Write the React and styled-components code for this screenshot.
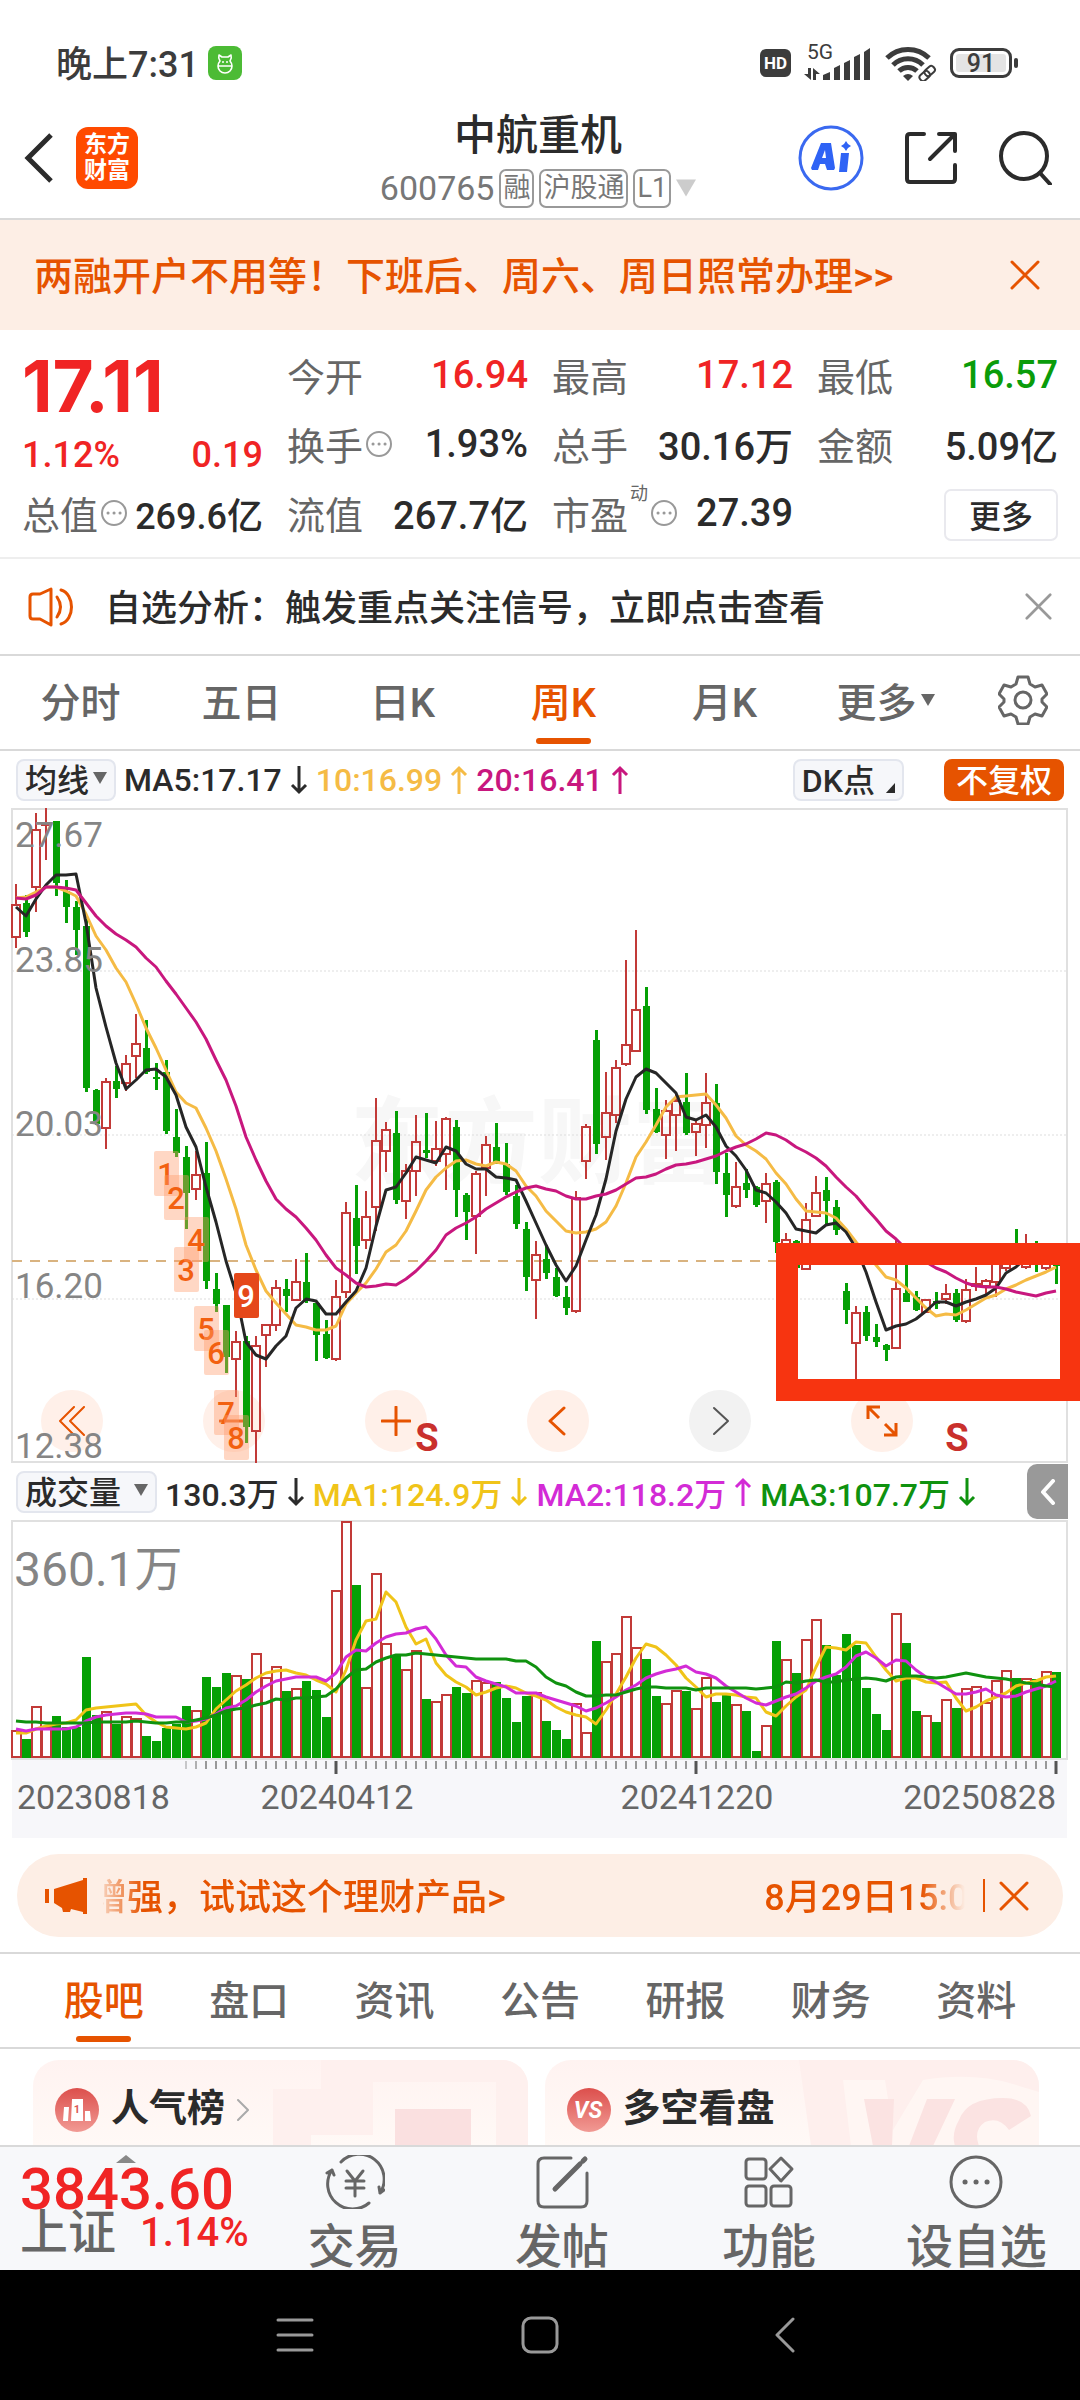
import React from "react";
import styled, { createGlobalStyle, css } from "styled-components";

const GlobalStyle = createGlobalStyle`
  * { box-sizing: border-box; }
  body {
    margin: 0;
    background: #fff;
    color: #2b2b2b;
    font-family: Roboto, "Noto Sans CJK SC", sans-serif;
    font-weight: 500;
  }
  button {
    margin: 0;
    padding: 0;
    border: 0;
    background: none;
    color: inherit;
    font: inherit;
    cursor: pointer;
  }
  a { color: inherit; text-decoration: none; }
  svg { display: block; flex: none; }
  h1, h2, p, dl, dt, dd { margin: 0; font-weight: 500; }
`;

const C = {
  ink: "#2b2b2b",
  grey: "#666",
  orange: "#e65300",
  red: "#f02424",
  green: "#0a9c0a",
  up: "#c23a38",
  down: "#05a005",
  ma5: "#262626",
  ma10: "#f5bb45",
  ma20: "#c8177e",
  vol1: "#f0c419",
  vol2: "#d32bd6",
  vol3: "#0f920f",
  line: "#d9d9d9",
  peach: "#fdeee5",
};

/* ---------- market data ---------- */

// direction, high, body top, body bottom, low (chart levels, 39 = top edge)
const CANDLES = `u 205 250 320 345|d 229 246 310 319|u 50 88 212 265|u 39 72 76 153|d 68 68 202 230|d 195 220 254 290|d 242 255 304 360|d 280 297 648 658|d 652 654 727 730|u 626 636 736 781|d 600 633 650 671|u 576 597 638 655|u 487 553 579 628|d 500 562 614 618|d 595 624 629 653|d 588 615 743 748|d 695 755 790 800|d 775 800 878 957|u 785 838 868 892|d 767 833 1070 1086|d 1051 1087 1119 1136|d 1122 1122 1234 1270|u 1178 1203 1238 1322|d 1190 1199 1388 1421|u 1190 1210 1396 1466|u 1163 1166 1186 1256|u 1068 1084 1165 1178|d 1065 1087 1101 1137|u 1021 1072 1110 1113|d 1008 1072 1112 1117|d 1117 1118 1186 1243|d 1155 1184 1237 1239|u 1067 1105 1238 1243|u 897 922 1093 1107|d 861 933 993 1055|u 873 930 979 1000|u 671 765 907 960|u 722 741 786 832|d 698 746 892 902|u 815 829 895 934|u 708 766 830 884|d 703 784 791 802|u 720 782 808 818|u 711 717 793 872|d 719 733 872 929|d 877 881 919 980|u 830 837 928 1010|u 754 774 822 883|d 726 778 810 815|d 769 815 875 881|d 860 885 946 955|d 940 957 1060 1092|u 982 1012 1067 1151|d 990 1022 1052 1064|d 1040 1061 1101 1104|d 1081 1103 1128 1144|u 874 889 1134 1139|u 727 733 808 847|d 523 545 770 793|u 614 703 755 805|u 587 605 708 725|u 371 555 597 602|u 304 479 568 571|d 429 470 697 706|d 648 695 745 747|u 674 699 751 804|u 657 677 708 785|d 616 680 747 751|u 720 728 744 797|u 616 681 730 779|d 640 681 831 858|d 790 834 881 929|u 809 865 905 911|d 825 855 871 888|d 862 865 903 907|u 833 858 896 942|d 849 853 985 1008|u 964 980 1010 1012|d 980 982 1040 1045|u 900 936 1042 1045|u 841 877 927 930|d 843 871 896 945|d 892 908 958 969|d 1074 1091 1132 1162|u 1123 1139 1204 1300|d 1124 1136 1190 1199|d 1163 1192 1202 1212|d 1206 1208 1219 1243|u 980 1087 1215 1218|d 1020 1095 1114 1116|d 1090 1105 1133 1135|u 1108 1110 1137 1139|d 1093 1112 1120 1130|u 1075 1098 1108 1120|d 1086 1095 1155 1158|u 1065 1089 1157 1160|u 1038 1075 1079 1090|u 1065 1069 1081 1100|u 1000 1030 1071 1105|u 1000 1005 1040 1048|d 957 1000 1020 1030|u 967 1010 1038 1043|d 983 1000 1030 1050|u 1010 1015 1040 1046|d 1005 1010 1036 1075`
  .split("|")
  .map((row) => {
    const [dir, ...rest] = row.split(" ");
    const [high, top, bottom, low] = rest.map(Number);
    return { dir, high, top, bottom, low };
  });

const MA5 = [255,275,238,207,184,184,183,290,430,515,595,652,631,610,608,625,665,733,777,865,940,1025,1095,1202,1230,1240,1210,1190,1127,1108,1112,1142,1142,1115,1090,1040,950,872,865,833,800,805,812,778,787,815,826,825,843,844,850,896,942,990,1035,1070,1037,980,925,848,742,673,624,608,617,637,660,713,719,708,733,776,798,828,870,878,898,921,955,961,965,948,943,962,998,1050,1115,1176,1168,1163,1151,1134,1114,1116,1124,1115,1109,1099,1085,1052,1038,1020,1015,1018,1022];
const MA10 = [236,232,222,212,212,220,230,270,318,348,388,418,466,518,562,610,658,682,693,737,785,848,912,990,1045,1090,1118,1142,1164,1170,1176,1177,1167,1120,1095,1073,1042,1007,990,960,916,872,842,822,808,806,815,818,811,815,830,862,885,917,938,960,965,963,957,940,906,855,800,766,730,690,668,667,663,661,685,715,753,772,787,804,834,858,890,916,920,922,932,955,985,1010,1035,1060,1066,1085,1106,1128,1145,1142,1144,1133,1120,1106,1099,1087,1077,1067,1058,1050,1038];
const MA20 = [236,238,228,212,211,214,217,245,275,297,313,327,342,365,386,415,445,475,506,543,587,632,687,755,805,852,890,913,930,953,980,1012,1040,1056,1073,1083,1081,1075,1077,1065,1047,1025,1002,970,954,942,930,913,899,887,876,866,862,868,874,883,890,890,885,879,870,858,844,842,836,826,817,815,811,803,796,786,778,770,759,747,751,763,777,789,802,819,843,864,884,910,935,960,978,1000,1018,1028,1040,1050,1062,1074,1080,1082,1082,1086,1093,1098,1102,1096,1090];

// volume bar levels, 240 = top edge, 955 = zero line
const VOLUMES = "u870 d897 u797 u858 d828 d862 d860 d650 d825 u814 d852 u827 u834 d888 d903 d865 d852 d798 u810 d712 d741 d699 u705 d716 u640 u710 u679 d753 u745 d724 d750 d831 u450 u243 d434 u742 u398 u608 d645 u687 u630 d778 u783 u762 d741 d760 u720 u725 d727 d773 d846 d768 u755 d843 d871 d896 u789 u877 d603 u663 u639 u527 u620 d656 d767 u789 u750 d753 u804 u711 d787 d760 u792 d814 d932 u855 d602 u658 d699 u597 u537 d614 d705 d581 d614 d744 d821 d871 u518 d608 d814 u825 d846 u777 d803 u744 u737 u786 u719 u690 d715 u713 d718 u694 d697"
  .split(" ")
  .map((v) => ({ dir: v[0], top: Number(v.slice(1)) }));

const VMA1 = [880,880,868,858,852,850,840,810,803,801,798,795,793,825,845,860,864,867,862,850,806,780,752,735,715,700,693,690,698,705,720,732,757,690,600,542,538,455,487,560,613,597,670,705,727,740,765,755,745,738,745,760,768,780,800,815,825,831,852,810,762,710,655,612,622,645,675,715,742,770,763,761,765,772,775,815,828,797,770,750,680,620,624,630,607,610,650,690,723,715,714,725,728,726,775,812,800,783,770,758,738,730,722,712,708];
const VMA2 = [868,872,867,868,867,866,860,842,832,826,822,818,820,823,830,830,831,845,842,838,822,805,797,780,755,738,722,716,710,710,712,724,700,650,630,634,608,592,582,578,566,562,597,645,677,680,710,723,732,741,760,760,758,770,781,790,797,812,803,790,770,750,735,715,703,693,688,678,695,702,715,738,757,775,790,795,782,770,762,745,722,710,702,680,648,637,655,677,660,662,690,712,727,745,762,762,757,747,765,772,767,757,746,737,722];
const VMA3 = [843,847,847,848,850,850,848,850,847,846,846,846,844,846,850,848,847,845,840,835,825,812,808,803,794,788,776,779,775,773,770,768,748,715,690,687,665,653,646,644,638,641,645,648,652,655,658,657,656,658,663,662,680,710,730,738,755,768,767,766,766,755,747,740,741,743,743,745,749,745,743,743,743,744,747,744,740,725,728,723,720,725,727,720,717,715,718,723,710,707,708,710,713,711,705,698,705,712,714,718,724,730,733,737,740];

const SIGNALS = [
  ["1", 15, 786], ["2", 16, 838], ["3", 17, 996], ["4", 18, 930], ["5", 19, 1124],
  ["6", 20, 1175], ["7", 21, 1307], ["8", 22, 1360], ["9", 23, 1052],
];

const xOf = (i) => 4 + i * 10;
const priceY = (v) => Math.round((v - 39) / 2.178);
const volumeY = (v) => Math.round((v - 240) / 3);
const points = (list, scale) => list.map((v, i) => `${xOf(i)},${scale(v)}`).join(" ");

/* ---------- shared parts ---------- */

const Page = styled.div`
  display: flex;
  flex-direction: column;
  overflow: hidden;
`;

const Row = styled.div`
  display: flex;
  align-items: center;
  gap: ${(p) => p.$gap || 0}px;
`;

const IconButton = styled.button`
  display: flex;
  align-items: center;
  justify-content: center;
`;

const Stroke = ({ w, h, box, color = C.ink, width = 3, children, ...rest }) => (
  <svg width={w} height={h} viewBox={box || `0 0 ${w} ${h}`} fill="none" stroke={color}
    strokeWidth={width} strokeLinecap="round" strokeLinejoin="round" aria-hidden="true" {...rest}>
    {children}
  </svg>
);

const Cross = ({ size, color }) => (
  <Stroke w={size} h={size} box="0 0 30 30" color={color} width={3}>
    <path d="M2 2 28 28M28 2 2 28" />
  </Stroke>
);

const Arrow = ({ up }) => (
  <Stroke w={18} h={30} color="currentColor" width={3} strokeLinecap="butt" strokeLinejoin="miter">
    {up ? <path d="M9 29V3M2 10 9 3l7 7" /> : <path d="M9 1v26M2 20l7 7 7-7" />}
  </Stroke>
);

const Caret = ({ size = 14, color = C.grey }) => (
  <svg width={size} height={size} viewBox="0 0 14 14" fill={color} aria-hidden="true">
    <path d="M0 1h14L7 13z" />
  </svg>
);

/* ---------- status bar ---------- */

const StatusBar = styled.div`
  display: flex;
  justify-content: space-between;
  align-items: center;
  height: 102px;
  padding: 24px 62px 0 56px;
  color: #3c3c3c;
  font-size: 36px;
`;

const Clock = styled.span`
  padding-bottom: 4px;
`;

const Battery = styled.div`
  display: flex;
  align-items: center;
  gap: 2px;
  &::after {
    content: "";
    width: 4px;
    height: 10px;
    border-radius: 2px;
    background: #3c3c3c;
  }
`;

const BatteryCell = styled.span`
  width: 62px;
  height: 30px;
  border: 3px solid #3c3c3c;
  border-radius: 9px;
  background: #e4e4e4;
  box-shadow: inset 0 0 0 3px #fff;
  font-size: 25px;
  line-height: 25px;
  text-align: center;
`;

const HdBadge = styled.span`
  width: 31px;
  height: 28px;
  border-radius: 6px;
  background: #3c3c3c;
  color: #fff;
  font-size: 17px;
  font-weight: 700;
  line-height: 28px;
  text-align: center;
`;

/* ---------- header ---------- */

const Header = styled.header`
  display: grid;
  grid-template-columns: 1fr auto 1fr;
  align-items: center;
  height: 118px;
  padding: 0 28px 4px 24px;
  border-bottom: 2px solid ${C.line};
`;

const Logo = styled.a`
  display: grid;
  place-content: center;
  width: 62px;
  height: 62px;
  border-radius: 12px;
  background: #ff4a00;
  color: #fff;
  font-size: 23px;
  font-weight: 700;
  line-height: 26px;
`;

const TitleBlock = styled.div`
  display: flex;
  flex-direction: column;
  align-items: center;
  gap: 6px;
`;

const Title = styled.h1`
  font-size: 42px;
  line-height: 54px;
`;

const Code = styled.span`
  color: #777;
  font-size: 34px;
  font-weight: 400;
  line-height: 38px;
`;

const Tag = styled.span`
  height: 39px;
  padding: 0 2px;
  border: 2px solid #999;
  border-radius: 7px;
  color: #777;
  font-size: 27px;
  font-weight: 400;
  line-height: 34px;
`;

const HeaderActions = styled(Row)`
  justify-content: flex-end;
`;

/* ---------- banner and notice ---------- */

const Banner = styled.section`
  display: flex;
  align-items: center;
  justify-content: space-between;
  height: 110px;
  padding: 0 40px 0 34px;
  background: ${C.peach};
  color: ${C.orange};
  font-size: 39px;
  a { padding-bottom: 4px; }
`;

const Notice = styled.section`
  display: flex;
  align-items: center;
  gap: 30px;
  height: 97px;
  padding: 0 28px;
  border-bottom: 2px solid ${C.line};
  font-size: 36px;
  p { flex: 1; padding-bottom: 4px; }
`;

/* ---------- quote ---------- */

const Quote = styled.section`
  display: grid;
  grid-template-columns: repeat(4, 1fr);
  column-gap: 24px;
  padding: 12px 22px 8px;
  border-bottom: 2px solid #eee;
`;

const Cell = styled.dl`
  display: flex;
  align-items: center;
  justify-content: space-between;
  height: 69px;
  padding-bottom: 4px;
  white-space: nowrap;
  dt {
    display: flex;
    align-items: center;
    gap: 2px;
    color: ${C.grey};
    font-size: 38px;
    font-weight: 400;
  }
  dd {
    color: ${(p) => p.$color || C.ink};
    font-size: ${(p) => (p.$compact ? 36 : 38)}px;
  }
`;

const LastPrice = styled.p`
  height: 88px;
  color: ${C.red};
  font-family: Inter, sans-serif;
  font-size: 71px;
  font-weight: 700;
  line-height: 88px;
`;

const ChangeRow = styled.p`
  display: flex;
  align-items: center;
  justify-content: space-between;
  height: 50px;
  color: ${C.red};
  font-size: 36px;
`;

const Sup = styled.sup`
  align-self: flex-start;
  font-size: 18px;
  line-height: 18px;
`;

const MoreCell = styled.div`
  display: flex;
  align-items: center;
  justify-content: flex-end;
  height: 69px;
`;

const MoreButton = styled.button`
  width: 114px;
  height: 52px;
  padding-bottom: 2px;
  border: 2px solid #e9e9ee;
  border-radius: 7px;
  font-size: 32px;
`;

const Info = () => (
  <Stroke w={28} h={28} color="#999" width={2}>
    <circle cx="14" cy="14" r="12" />
    <path d="M8 14h.1M14 14h.1M20 14h.1" strokeWidth="3" />
  </Stroke>
);

const Item = ({ label, value, color, info, sup, compact }) => (
  <Cell $color={color} $compact={compact}>
    <dt>{label}{sup && <Sup>{sup}</Sup>}{info && <Info />}</dt>
    <dd>{value}</dd>
  </Cell>
);

/* ---------- tabs ---------- */

const Tabs = styled.nav`
  display: grid;
  grid-template-columns: ${(p) => p.$columns};
  height: 95px;
  padding: 0 ${(p) => p.$pad || 0}px;
  border-bottom: 2px solid ${C.line};
`;

const Tab = styled.button`
  position: relative;
  display: flex;
  align-items: center;
  justify-content: center;
  gap: 4px;
  padding-bottom: 5px;
  color: ${C.grey};
  font-size: 40px;
  ${(p) => p.$active && css`
    color: ${C.orange};
    &::after {
      content: "";
      position: absolute;
      bottom: 5px;
      width: 55px;
      height: 6px;
      border-radius: 3px;
      background: ${C.orange};
    }
  `}
`;

/* ---------- chart ---------- */

const ChartSection = styled.section`
  padding: 0 12px;
`;

const Legend = styled.div`
  display: flex;
  align-items: center;
  gap: 8px;
  height: 57px;
  padding: 0 4px;
  font-size: 32px;
  white-space: nowrap;
`;

const LegendItem = styled.span`
  display: flex;
  align-items: center;
  gap: 8px;
  color: ${(p) => p.$color};
`;

const Chip = styled.button`
  display: flex;
  align-items: center;
  gap: ${(p) => p.$gap || 4}px;
  height: 42px;
  padding: 0 7px 3px;
  border: 2px solid #e3e6ee;
  border-radius: 8px;
  background: #f6f7fa;
  font-size: 32px;
`;

const SolidChip = styled(Chip)`
  margin-left: 32px;
  padding: 0 10px 3px;
  border-color: ${C.orange};
  background: ${C.orange};
  color: #fff;
`;

const Spacer = styled.span`
  flex: 1;
`;

const Plot = styled.div`
  position: relative;
  svg.plot {
    position: relative;
    width: 100%;
    height: auto;
    overflow: visible;
    pointer-events: none;
  }
  text { font-family: Roboto, "Noto Sans CJK SC", sans-serif; }
`;

const Controls = styled.div`
  position: absolute;
  left: 29px;
  bottom: 11px;
  display: flex;
  gap: 100px;
`;

const RoundButton = styled.button`
  display: grid;
  place-items: center;
  width: 62px;
  height: 62px;
  border-radius: 50%;
  background: ${(p) => (p.$muted ? "#f2f2f2" : "#fff0e9")};
`;

const Highlight = styled.div`
  position: absolute;
  top: 435px;
  left: 764px;
  right: -12px;
  height: 158px;
  border: 22px solid #f73410;
  border-right-width: 20px;
`;

const Drawer = styled.button`
  display: grid;
  place-items: center;
  align-self: stretch;
  width: 41px;
  margin: 1px -4px 1px 0;
  border-radius: 10px 0 0 10px;
  background: #999;
`;

const Average = ({ list, scale, color }) => (
  <polyline points={points(list, scale)} fill="none" stroke={color} strokeWidth="3" strokeLinejoin="round" />
);

const Candle = ({ data, x }) => {
  const [h, t, b, l] = [data.high, data.top, data.bottom, data.low].map(priceY);
  const size = Math.max(b - t, 2);
  if (data.dir === "d") {
    return (
      <g fill={C.down}>
        <rect x={x - 1} y={h} width="3" height={Math.max(l - h, 1)} />
        <rect x={x - 3} y={t} width="7" height={size} />
      </g>
    );
  }
  return (
    <g stroke={C.up} strokeWidth="2" fill="none">
      <path d={`M${x} ${h}V${t}M${x} ${b}V${l}`} />
      <rect x={x - 4} y={t} width="8" height={size} />
    </g>
  );
};

const PriceChart = () => (
  <svg className="plot" viewBox="0 0 1056 655" role="img" aria-label="周K线图">
    <text x="338" y="368" fontSize="94" fontWeight="700" fill="#f7f7f7">东方财富</text>
    <rect x="0" y="1" width="1055" height="653" fill="none" stroke="#e0e0e0" strokeWidth="2" />
    {[395, 752, 1109].map((v) => (
      <path key={v} d={`M0 ${priceY(v)}H1055`} stroke="#ddd" strokeWidth="1" strokeDasharray="2 2" />
    ))}
    <path d={`M0 ${priceY(1025)}H1055`} stroke="#d9b380" strokeWidth="2" strokeDasharray="10 8" />
    {CANDLES.map((c, i) => <Candle key={i} data={c} x={xOf(i)} />)}
    <Average list={MA10} scale={priceY} color={C.ma10} />
    <Average list={MA5} scale={priceY} color={C.ma5} />
    <Average list={MA20} scale={priceY} color={C.ma20} />
    <g fontSize="35" fill="#858585" fontWeight="400">
      <text x="3" y="39">27.67</text>
      <text x="3" y="164">23.85</text>
      <text x="3" y="328">20.03</text>
      <text x="3" y="490">16.20</text>
      <text x="3" y="650">12.38</text>
    </g>
    {SIGNALS.map(([n, i, v]) => (
      <g key={n} textAnchor="middle" fontSize="31" fontWeight="500">
        <rect x={xOf(i) - 12} y={priceY(v)} width="25" height="45" rx="2"
          fill={n === "9" ? "#e5481a" : "#ff9b6c"} fillOpacity={n === "9" ? 1 : 0.4} />
        <text x={xOf(i)} y={priceY(v) + 34} fill={n === "9" ? "#fff" : "#f26010"}>{n}</text>
      </g>
    ))}
    <g fontSize="38" fontWeight="700" fill="#c9302c" textAnchor="middle">
      <text x="415" y="643">S</text>
      <text x="945" y="643">S</text>
    </g>
  </svg>
);

const VolumeChart = () => {
  const base = volumeY(955);
  return (
    <svg className="plot" viewBox="0 0 1056 240" role="img" aria-label="成交量图">
      <rect x="0" y="1" width="1055" height="238" fill="none" stroke="#e0e0e0" strokeWidth="2" />
      {VOLUMES.map((b, i) => {
        const y = volumeY(b.top);
        return b.dir === "d"
          ? <rect key={i} x={xOf(i) - 4} y={y} width="9" height={base - y} fill={C.down} />
          : <rect key={i} x={xOf(i) - 4} y={y + 1} width="9" height={base - y - 2} fill="#fff" stroke={C.up} strokeWidth="2" />;
      })}
      <Average list={VMA1} scale={volumeY} color={C.vol1} />
      <Average list={VMA2} scale={volumeY} color={C.vol2} />
      <Average list={VMA3} scale={volumeY} color={C.vol3} />
      <text x="2" y="66" fontSize="48" fill="#858585" fontWeight="400">360.1万</text>
    </svg>
  );
};

const Axis = () => (
  <svg className="plot" viewBox="0 0 1056 78" aria-hidden="true">
    <rect width="1055" height="78" fill="#f7f7fa" />
    {Array.from({ length: 88 }, (_, k) => k + 17).map((i) => {
      const major = i === 32 || i === 68 || i === 104;
      return <path key={i} d={`M${xOf(i)} 1v${major ? 13 : 8}`} stroke={major ? "#555" : "#999"}
        strokeWidth={major ? 3 : 2} opacity={Math.min(1, (i - 15) / 4)} />;
    })}
    <g fontSize="34" fill={C.grey} fontWeight="400">
      <text x="5" y="49">20230818</text>
      <text x="325" y="49" textAnchor="middle">20240412</text>
      <text x="685" y="49" textAnchor="middle">20241220</text>
      <text x="1044" y="49" textAnchor="end">20250828</text>
    </g>
  </svg>
);

/* ---------- promo ---------- */

const PromoWrap = styled.section`
  padding: 16px 17px 15px;
  border-bottom: 2px solid ${C.line};
`;

const Promo = styled.div`
  display: flex;
  align-items: center;
  height: 83px;
  padding: 0 34px 0 28px;
  border-radius: 42px;
  background: ${C.peach};
  color: ${C.orange};
`;

const Marquee = styled.a`
  flex: 1;
  display: flex;
  justify-content: space-between;
  min-width: 0;
  margin: 0 18px 0 16px;
  padding-bottom: 4px;
  overflow: hidden;
  font-size: 36px;
  white-space: nowrap;
  mask-image: linear-gradient(90deg, rgba(0,0,0,.2), #000 40px, #000 calc(100% - 44px), transparent);
  span:first-child { margin-left: -12px; }
  span:last-child { margin-right: -24px; }
`;

const Divider = styled.i`
  width: 2px;
  height: 33px;
  margin-right: 14px;
  background: ${C.orange};
`;

/* ---------- cards ---------- */

const Cards = styled.section`
  display: grid;
  grid-template-columns: 1fr 1fr;
  gap: 17px;
  height: 96px;
  padding: 11px 41px 0 33px;
`;

const Card = styled.a`
  position: relative;
  display: flex;
  align-items: center;
  gap: 12px;
  padding: 14px 22px 0;
  overflow: hidden;
  border-radius: 26px 26px 0 0;
  background: linear-gradient(#fff3f1, #fff9f6);
  h2 { padding-bottom: 4px; font-size: 38px; font-weight: 700; line-height: 48px; z-index: 1; }
  svg { z-index: 1; }
`;

const CardArt = styled.svg`
  position: absolute;
  right: 0;
  top: 0;
  && { z-index: 0; }
`;

/* ---------- bottom bar ---------- */

const BottomBar = styled.nav`
  display: grid;
  grid-template-columns: 251px repeat(4, 1fr);
  height: 125px;
  overflow: hidden;
  border-top: 2px solid ${C.line};
  background: #f7f8fa;
`;

const IndexLink = styled.a`
  display: flex;
  flex-direction: column;
  padding: 8px 0 0 20px;
  color: ${C.red};
  white-space: nowrap;
  svg { margin-left: 96px; }
`;

const IndexValue = styled.span`
  font-size: 58px;
  line-height: 48px;
`;

const IndexRow = styled.span`
  display: flex;
  align-items: center;
  gap: 24px;
  font-size: 40px;
  line-height: 40px;
  b { color: ${C.grey}; font-size: 48px; font-weight: 500; }
`;

const BarButton = styled.button`
  display: flex;
  flex-direction: column;
  align-items: center;
  justify-content: flex-start;
  gap: 4px;
  padding-top: 8px;
  color: ${C.grey};
  font-size: 47px;
  line-height: 68px;
`;

const SystemNav = styled.nav`
  display: flex;
  align-items: center;
  justify-content: center;
  gap: 207px;
  height: 130px;
  background: #000;
`;

const SystemButton = styled(IconButton)`
  width: 38px;
  height: 40px;
`;

/* ---------- page ---------- */

export default function App() {
  return (
    <Page>
      <GlobalStyle />

      <StatusBar>
        <Row $gap={9}>
          <Clock>晚上7:31</Clock>
          <svg width="34" height="34" viewBox="0 0 34 34" aria-hidden="true">
            <rect width="34" height="34" rx="8" fill="#4cbb35" />
            <g fill="none" stroke="#fff" strokeWidth="1.6" strokeLinejoin="round">
              <path d="M12 15q-2-3-1-6l3 2h6l3-2q1 3-1 6a8 8 0 0 1 2 5c0 4-3 7-7 7s-7-3-7-7a8 8 0 0 1 2-5zM10 20h14" />
            </g>
            <circle cx="15" cy="16" r="1" fill="#fff" /><circle cx="19" cy="16" r="1" fill="#fff" />
          </svg>
        </Row>
        <Row $gap={13}>
          <HdBadge>HD</HdBadge>
          <svg width="68" height="36" viewBox="0 0 68 36" fill="#3c3c3c" overflow="visible" aria-hidden="true">
            <text x="3" y="14" fontSize="21" fontFamily="Roboto" fontWeight="400">5G</text>
            <path d="M0 29h4v-6h3v12zM9 23l7 6h-4v6H9z" />
            <path d="M19 30l7-3v8h-7zM30 23l6-3v15h-6zM40 18l6-3v20h-6zM50 12l6-3v26h-6zM60 7l6-4v32h-6z" />
          </svg>
          <svg width="52" height="36" viewBox="0 0 52 36" fill="none" stroke="#3c3c3c" strokeWidth="5" aria-hidden="true">
            <path d="M2 13a30 30 0 0 1 42 0M8 20a21 21 0 0 1 30 0M14 26a13 13 0 0 1 18 0" />
            <path d="M18 31q5-4 10 0l-5 5z" fill="#3c3c3c" stroke="none" />
            <g strokeWidth="2"><rect x="-5" y="-3" width="11" height="7" rx="3" transform="translate(39 31) rotate(-42)" />
              <rect x="-5" y="-3" width="11" height="7" rx="3" transform="translate(44 26) rotate(-42)" /></g>
          </svg>
          <Battery><BatteryCell>91</BatteryCell></Battery>
        </Row>
      </StatusBar>

      <Header>
        <Row $gap={22}>
          <IconButton aria-label="返回">
            <Stroke w={30} h={50} width={5} strokeLinecap="butt" strokeLinejoin="miter"><path d="M27 2 4 25l23 23" /></Stroke>
          </IconButton>
          <Logo href="#home"><span>东方</span><span>财富</span></Logo>
        </Row>
        <TitleBlock>
          <Title>中航重机</Title>
          <Row $gap={5}>
            <Code>600765</Code>
            <Tag>融</Tag>
            <Tag>沪股通</Tag>
            <Tag>L1</Tag>
            <Caret size={20} color="#ccc" />
          </Row>
        </TitleBlock>
        <HeaderActions $gap={40}>
          <IconButton aria-label="AI 助手">
            <svg width="66" height="66" viewBox="0 0 66 66" aria-hidden="true">
              <circle cx="33" cy="33" r="31" fill="none" stroke="#3a69f0" strokeWidth="3" />
              <g fill="#2f63f5">
                <path fillRule="evenodd" d="M13 43 23 18h10l4 25-1 2h-7l-2-6h-5l-2 6h-6zM24 33h4l-1-8z" />
                <path d="M43 28h8l-2 19h-8zM48 16l2 3 3 2-3 2-2 3-2-3-3-2 3-2z" />
              </g>
            </svg>
          </IconButton>
          <IconButton aria-label="分享">
            <Stroke w={54} h={54} width={4}>
              <path d="M20 3H6q-3 0-3 3v42q0 3 3 3h42q3 0 3-3V34M35 3h16v17M50 4 26 28" />
            </Stroke>
          </IconButton>
          <IconButton aria-label="搜索">
            <Stroke w={54} h={54} width={4}><circle cx="26" cy="25" r="23" /><path d="m42 42 10 11" /></Stroke>
          </IconButton>
        </HeaderActions>
      </Header>

      <Banner>
        <a href="#margin">两融开户不用等！下班后、周六、周日照常办理&gt;&gt;</a>
        <IconButton aria-label="关闭"><Cross size={30} color={C.orange} /></IconButton>
      </Banner>

      <Quote>
        <div>
          <LastPrice>17.11</LastPrice>
          <ChangeRow><span>1.12%</span><span>0.19</span></ChangeRow>
          <Item label="总值" info value="269.6亿" compact />
        </div>
        <div>
          <Item label="今开" value="16.94" color={C.red} />
          <Item label="换手" info value="1.93%" />
          <Item label="流值" value="267.7亿" />
        </div>
        <div>
          <Item label="最高" value="17.12" color={C.red} />
          <Item label="总手" value="30.16万" />
          <Item label="市盈" sup="动" info value="27.39" />
        </div>
        <div>
          <Item label="最低" value="16.57" color={C.green} />
          <Item label="金额" value="5.09亿" />
          <MoreCell><MoreButton>更多</MoreButton></MoreCell>
        </div>
      </Quote>

      <Notice>
        <Stroke w={47} h={40} color={C.orange} width={3}>
          <path d="M2 10q0-3 3-3h7L23 2v36l-11-6H5q-3 0-3-3zM29 10q7 10 0 20M33 3c14 4 14 30 0 34" />
        </Stroke>
        <p>自选分析：触发重点关注信号，立即点击查看</p>
        <IconButton aria-label="关闭提示"><Cross size={27} color="#999" /></IconButton>
      </Notice>

      <Tabs $columns="repeat(6, 1fr) 114px">
        <Tab>分时</Tab>
        <Tab>五日</Tab>
        <Tab>日K</Tab>
        <Tab $active>周K</Tab>
        <Tab>月K</Tab>
        <Tab>更多<Caret /></Tab>
        <Tab aria-label="设置">
          <Stroke w={50} h={50} color={C.grey} width={3}>
            <path d="M20 2h10l2 7 5 3 7-2 5 9-5 5v3l5 5-5 9-7-2-5 3-2 7H20l-2-7-5-3-7 2-5-9 5-5v-3l-5-5 5-9 7 2 5-3z" />
            <circle cx="25" cy="25" r="8" />
          </Stroke>
        </Tab>
      </Tabs>

      <ChartSection>
        <Legend>
          <Chip>均线<Caret /></Chip>
          <LegendItem $color={C.ink}>MA5:17.17<Arrow /></LegendItem>
          <LegendItem $color={C.ma10}>10:16.99<Arrow up /></LegendItem>
          <LegendItem $color={C.ma20}>20:16.41<Arrow up /></LegendItem>
          <Spacer />
          <Chip $gap={10}>DK点
            <svg width="10" height="30" viewBox="0 0 10 30" aria-hidden="true"><path d="M10 20v11H0z" fill={C.ink} /></svg>
          </Chip>
          <SolidChip>不复权</SolidChip>
        </Legend>

        <Plot>
          <Controls>
            <RoundButton aria-label="最早">
              <Stroke w={30} h={30} color={C.orange} width={2}><path d="M17 1 3 15l14 14M27 1 13 15l14 14" /></Stroke>
            </RoundButton>
            <RoundButton aria-label="缩小">
              <Stroke w={30} h={30} color={C.orange} width={3}><path d="M1 15h28" /></Stroke>
            </RoundButton>
            <RoundButton aria-label="放大">
              <Stroke w={30} h={30} color={C.orange} width={3}><path d="M1 15h28M15 1v28" /></Stroke>
            </RoundButton>
            <RoundButton aria-label="左移">
              <Stroke w={30} h={30} color={C.orange} width={3}><path d="M21 2 7 15l14 13" /></Stroke>
            </RoundButton>
            <RoundButton aria-label="右移" $muted>
              <Stroke w={30} h={30} color="#555" width={2}><path d="m9 2 14 13L9 28" /></Stroke>
            </RoundButton>
            <RoundButton aria-label="全屏">
              <Stroke w={32} h={32} color={C.orange} width={3} strokeLinecap="butt" strokeLinejoin="miter">
                <path d="M2 14V2h12M2 2l11 11M30 18v12H18M30 30 19 19" />
              </Stroke>
            </RoundButton>
          </Controls>
          <PriceChart />
          <Highlight />
        </Plot>

        <Legend>
          <Chip $gap={13}>成交量<Caret /></Chip>
          <LegendItem $color={C.ink}>130.3万<Arrow /></LegendItem>
          <LegendItem $color={C.vol1}>MA1:124.9万<Arrow /></LegendItem>
          <LegendItem $color={C.vol2}>MA2:118.2万<Arrow up /></LegendItem>
          <LegendItem $color={C.vol3}>MA3:107.7万<Arrow /></LegendItem>
          <Spacer />
          <Drawer aria-label="展开指标">
            <Stroke w={16} h={26} color="#fff" width={4}><path d="M13 2 3 13l10 11" /></Stroke>
          </Drawer>
        </Legend>

        <Plot>
          <VolumeChart />
          <Axis />
        </Plot>
      </ChartSection>

      <PromoWrap>
        <Promo>
          <svg width="42" height="38" viewBox="0 0 42 38" fill={C.orange} aria-hidden="true">
            <path d="M0 12h4v14H0zM9 12 38 3V1h4v36h-4v-2l-12-3-1 3h-7l-1-4-8-5z" />
          </svg>
          <Marquee href="#promo">
            <span>增强，试试这个理财产品&gt;</span>
            <span>8月29日15:00</span>
          </Marquee>
          <Divider />
          <IconButton aria-label="关闭推广"><Cross size={30} color={C.orange} /></IconButton>
        </Promo>
      </PromoWrap>

      <Tabs $columns="repeat(7, 1fr)" $pad={31}>
        <Tab $active>股吧</Tab>
        <Tab>盘口</Tab>
        <Tab>资讯</Tab>
        <Tab>公告</Tab>
        <Tab>研报</Tab>
        <Tab>财务</Tab>
        <Tab>资料</Tab>
      </Tabs>

      <Cards>
        <Card href="#rank">
          <CardArt width="255" height="86" viewBox="0 0 255 86" aria-hidden="true">
            <path d="M48 0h207v86h-32V22H100v53H38v11H0V29h48z" fill="#fef0ee" />
            <path d="M122 49h76v37h-76z" fill="#fae0e0" />
          </CardArt>
          <svg width="44" height="44" viewBox="0 0 44 44" aria-hidden="true">
            <defs>
              <linearGradient id="disc" x1="0" y1="0" x2="0" y2="1">
                <stop offset="0" stopColor="#dc4f4c" /><stop offset="1" stopColor="#f19a94" />
              </linearGradient>
            </defs>
            <circle cx="22" cy="22" r="22" fill="url(#disc)" />
            <path d="M9 19h5l-1 14H8zM17 11h11v22H16zM30 23h5l1 10h-6z" fill="#fff" />
            <text x="22" y="25" fontSize="11" fontFamily="Roboto" fontWeight="700" fill="#dc5a56" textAnchor="middle">1</text>
          </svg>
          <h2>人气榜</h2>
          <Stroke w={12} h={22} color="#aaa" width={2}><path d="m1 1 10 10L1 21" /></Stroke>
        </Card>
        <Card href="#sentiment">
          <CardArt width="240" height="86" viewBox="0 0 240 86" aria-hidden="true">
            <path d="M0 0h240v86H12z" fill="#feefed" />
            <path d="M44 20h42l8 50 30-50q50-8 90 4l26 8v54H52z" fill="#fff6f3" />
            <path d="M65 39h30l-2 47H74zM128 39h28l-22 47h-24zM160 60q8-22 44-22 24 0 28 18l-22 14q-10-14-24-8-12 8-6 24h-24q-4-12 4-26z" fill="#fbe3e2" />
          </CardArt>
          <svg width="44" height="44" viewBox="0 0 44 44" aria-hidden="true">
            <circle cx="22" cy="22" r="22" fill="url(#disc)" />
            <text x="21" y="30" fontSize="23" fontFamily="Roboto" fontWeight="700" fontStyle="italic" fill="#fff" textAnchor="middle">VS</text>
          </svg>
          <h2>多空看盘</h2>
        </Card>
      </Cards>

      <BottomBar>
        <IndexLink href="#index">
          <svg width="20" height="10" viewBox="0 0 20 10" fill="#888" aria-hidden="true"><path d="M10 0 20 8H0z" /></svg>
          <IndexValue>3843.60</IndexValue>
          <IndexRow><b>上证</b>1.14%</IndexRow>
        </IndexLink>
        <BarButton>
          <Stroke w={60} h={54} color={C.grey} width={3}>
            <path d="M16 7a25 25 0 0 1 39 31M55 38l4-3M55 38l-1-6M44 48A25 25 0 0 1 7 15M7 15l-5 3M7 15l2 5" />
            <path d="m22 16 8 10 8-10M30 26v15M21 26h18M21 33h18" />
          </Stroke>
          交易
        </BarButton>
        <BarButton>
          <Stroke w={54} h={54} color={C.grey} width={3}>
            <path d="M36 3H9Q3 3 3 9v37q0 6 6 6h37q6 0 6-6V18" />
            <path d="M20 34 45 9M48 6l2-2" strokeWidth="5" />
          </Stroke>
          发帖
        </BarButton>
        <BarButton>
          <Stroke w={54} h={54} color={C.grey} width={3}>
            <rect x="4" y="4" width="20" height="20" rx="3" />
            <rect x="4" y="31" width="20" height="20" rx="3" />
            <rect x="29" y="31" width="20" height="20" rx="3" />
            <path d="m39 3 11 11-11 12-11-12z" />
          </Stroke>
          功能
        </BarButton>
        <BarButton>
          <Stroke w={54} h={54} color={C.grey} width={3}>
            <circle cx="27" cy="27" r="25" />
            <path d="M16 27h.1M27 27h.1M38 27h.1" strokeWidth="5" />
          </Stroke>
          设自选
        </BarButton>
      </BottomBar>

      <SystemNav>
        <SystemButton aria-label="最近任务">
          <Stroke w={38} h={36} color="#999" width={3}><path d="M2 3h34M2 18h34M2 33h34" /></Stroke>
        </SystemButton>
        <SystemButton aria-label="主屏幕">
          <Stroke w={38} h={38} color="#999" width={3}><rect x="2" y="2" width="34" height="34" rx="8" /></Stroke>
        </SystemButton>
        <SystemButton aria-label="后退">
          <Stroke w={20} h={36} color="#999" width={3}><path d="M18 2 2 18l16 16" /></Stroke>
        </SystemButton>
      </SystemNav>
    </Page>
  );
}
